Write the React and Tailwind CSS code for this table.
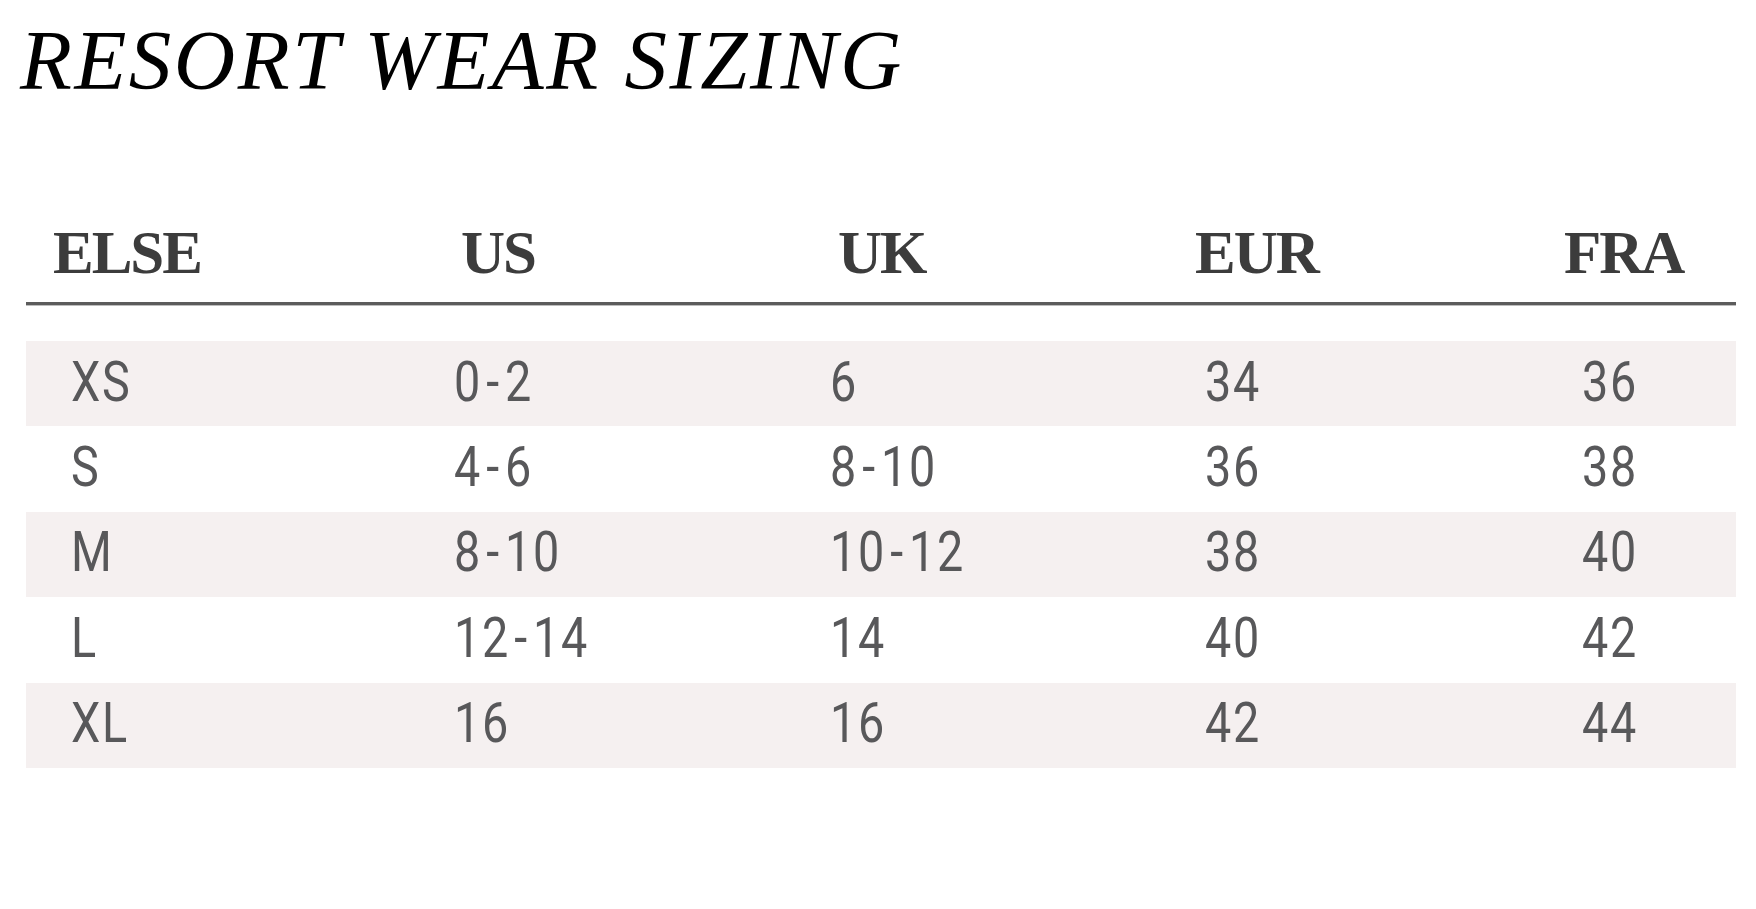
import React from "react";

const rows = [
  ["XS", "0-2", "6", "34", "36"],
  ["S", "4-6", "8-10", "36", "38"],
  ["M", "8-10", "10-12", "38", "40"],
  ["L", "12-14", "14", "40", "42"],
  ["XL", "16", "16", "42", "44"],
];

const headers = ["ELSE", "US", "UK", "EUR", "FRA"];

function Cell({ text }) {
  const parts = text.split("-");
  return (
    <span className="inline-block origin-left scale-x-[0.85] tracking-[2px]">
      {parts.map((p, i) => (
        <React.Fragment key={i}>
          {i > 0 && <span className="mx-[5px]">-</span>}
          {p}
        </React.Fragment>
      ))}
    </span>
  );
}

export default function App() {
  return (
    <div className="min-h-screen w-full bg-white">
      <div className="pl-[20px] pt-[18px]">
        <h1
          className="text-[85px] leading-none italic font-normal text-black tracking-[2.5px]"
          style={{ fontFamily: '"Liberation Serif", serif' }}
        >
          RESORT WEAR SIZING
        </h1>
      </div>

      <div className="mx-[26px] mt-[118px] w-[1710px]">
        <div
          className="grid grid-cols-[408px_377px_357px_369px_1fr] pl-[27px] h-[62px] items-center text-[#3c3c3c] font-bold text-[61px] leading-none tracking-[-2px]"
          style={{ fontFamily: '"Liberation Serif", serif' }}
        >
          {headers.map((h) => (
            <div key={h}>{h}</div>
          ))}
        </div>
        <div className="mt-[19px] h-[4px] border-t-[3px] border-b border-t-[#5c5c5c] border-b-[#bdbdbd]" />
        <div className="mt-[35px]">
          {rows.map((r, i) => (
            <div
              key={r[0]}
              className={`grid grid-cols-[383px_376px_375px_377px_1fr] pl-[45px] h-[85.4px] items-center pb-[3px] text-[#58585a] ${
                i % 2 === 0 ? "bg-[#f5f0f0]" : "bg-white"
              }`}
              style={{ fontFamily: "Roboto, sans-serif" }}
            >
              {r.map((c, j) => (
                <div key={j} className="text-[55px] leading-none font-normal">
                  <Cell text={c} />
                </div>
              ))}
            </div>
          ))}
        </div>
      </div>
    </div>
  );
}
